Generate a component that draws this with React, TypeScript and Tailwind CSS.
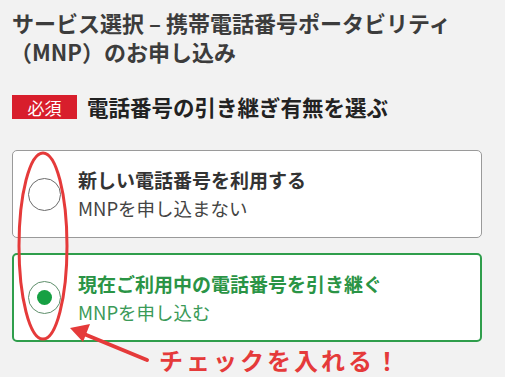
import React from "react";

function Radio({ checked }: { checked?: boolean }) {
  return (
    <span
      className={
        "flex h-[33px] w-[33px] shrink-0 items-center justify-center rounded-full border bg-white " +
        (checked ? "border-[#5f8f6c]" : "border-[#6b6b6b]")
      }
    >
      {checked && <span className="h-[15px] w-[15px] rounded-full bg-[#16a043]" />}
    </span>
  );
}

function Option({
  title,
  sub,
  checked,
}: {
  title: string;
  sub: string;
  checked?: boolean;
}) {
  return (
    <div
      className={
        "flex items-center gap-[17px] rounded-[5px] bg-white pl-[14px] " +
        (checked
          ? "h-[89px] border-2 border-[#2f9e4c]"
          : "h-[88px] border border-[#9a9a9a] pl-[15px]")
      }
    >
      <Radio checked={checked} />
      <div className="flex flex-col">
        <span
          className={
            "text-[19px] font-bold leading-[28px] " +
            (checked ? "text-[#2a9445]" : "text-[#333333]")
          }
        >
          {title}
        </span>
        <span
          className={
            "text-[18.5px] leading-[28px] " +
            (checked ? "text-[#3b9a58]" : "text-[#444444]")
          }
        >
          {sub}
        </span>
      </div>
    </div>
  );
}

export default function App() {
  return (
    <main
      className="relative h-[377px] w-[505px] overflow-hidden bg-[#f2f2f2]"
      style={{ fontFamily: '"Noto Sans CJK JP", "Noto Sans", sans-serif' }}
    >
      <div className="px-[12px] pt-[8px]">
        <h1 className="text-[22px] font-bold leading-[29px] text-[#3c3c3c]">
          サービス選択 – 携帯電話番号ポータビリティ
          <br />
          <span className="-ml-[2px]">（MNP）のお申し込み</span>
        </h1>

        <div className="mt-[27px] flex items-center gap-[10px]">
          <span className="flex h-[24px] w-[65px] items-center justify-center bg-[#d81e2c] text-[17px] leading-none text-white">
            必須
          </span>
          <h2 className="text-[21.5px] font-bold leading-[28px] text-[#222222]">
            電話番号の引き継ぎ有無を選ぶ
          </h2>
        </div>

        <div className="mt-[29px] flex flex-col gap-[15px] pr-[11px]">
          <Option title="新しい電話番号を利用する" sub="MNPを申し込まない" />
          <Option
            title="現在ご利用中の電話番号を引き継ぐ"
            sub="MNPを申し込む"
            checked
          />
        </div>

        <p className="mt-[1px] pl-[147px] text-[24px] font-bold leading-[34px] tracking-[3px] text-[#e53a3a]">
          チェックを入れる！
        </p>
      </div>

      <svg
        className="pointer-events-none absolute left-0 top-0"
        width="505"
        height="377"
        viewBox="0 0 505 377"
      >
        <ellipse
          cx="43"
          cy="246"
          rx="24"
          ry="93"
          fill="none"
          stroke="#e53a3a"
          strokeWidth="3"
        />
        <line
          x1="147"
          y1="360"
          x2="84"
          y2="334"
          stroke="#e53a3a"
          strokeWidth="4"
          strokeLinecap="round"
        />
        <polygon points="70,328 90,324 83,342" fill="#e53a3a" />
      </svg>
    </main>
  );
}
